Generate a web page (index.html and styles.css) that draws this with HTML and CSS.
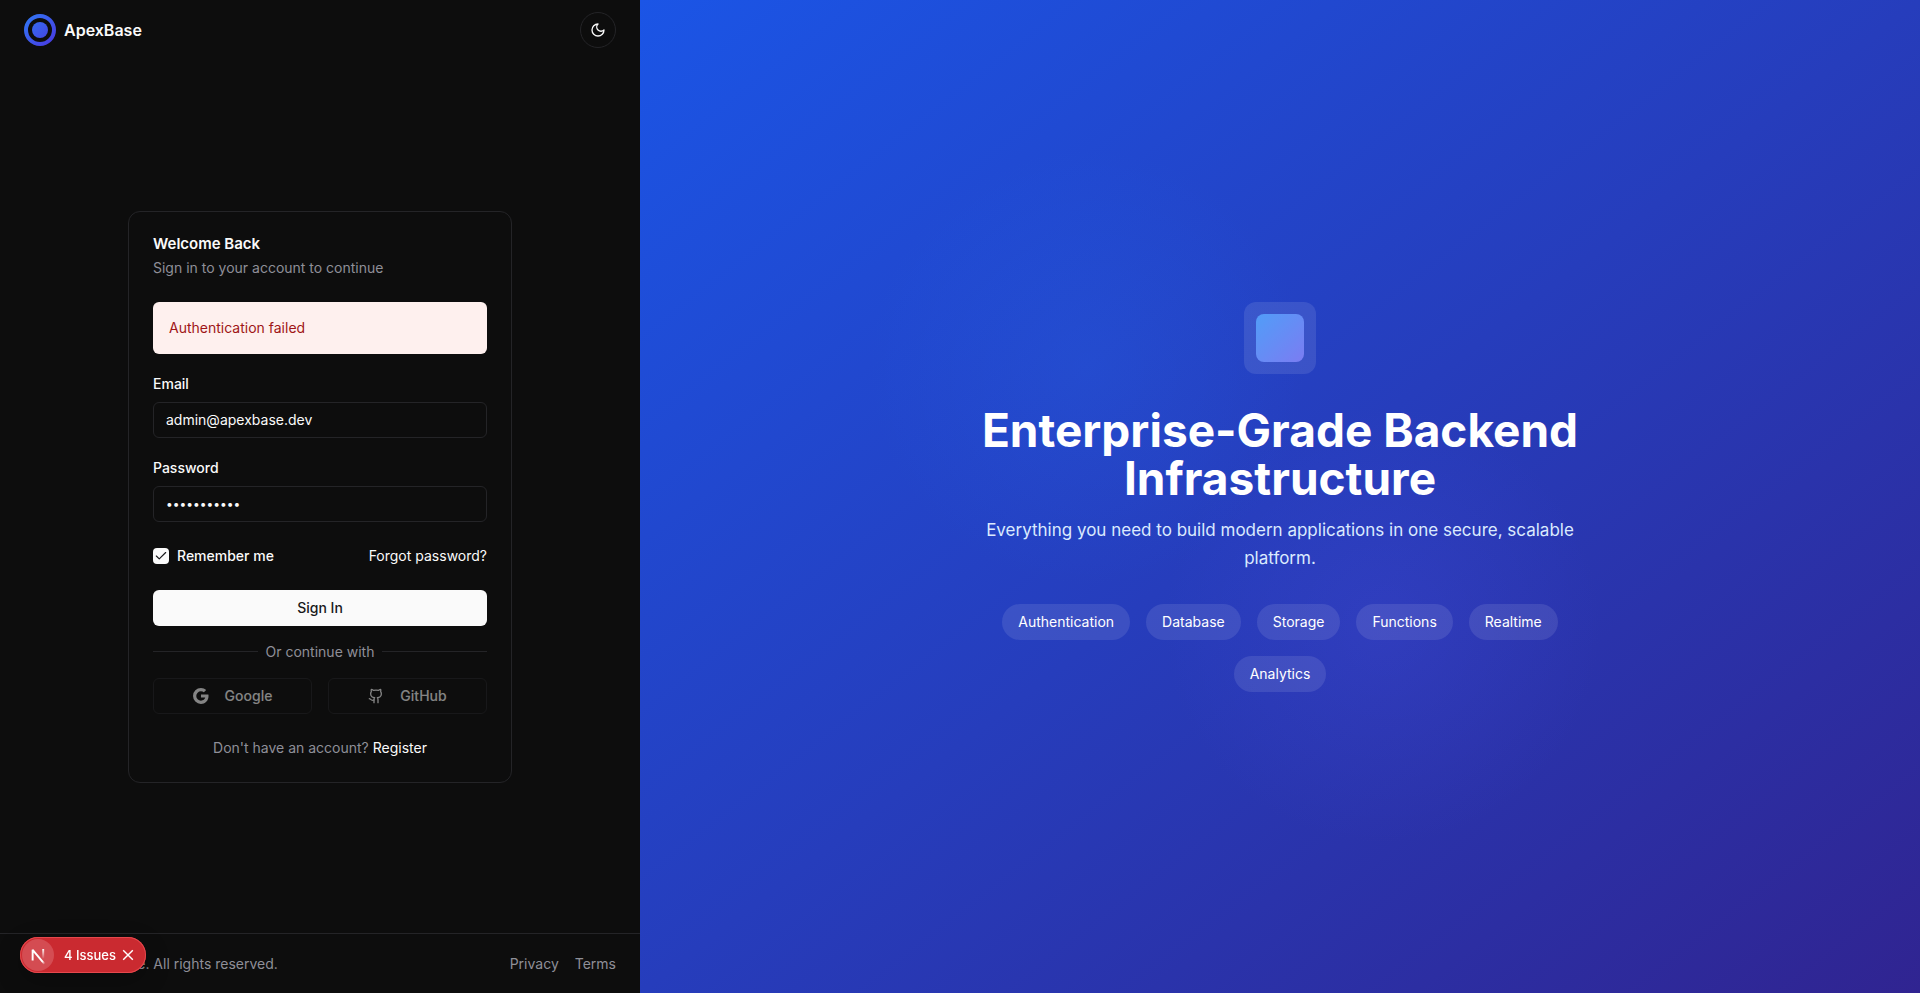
FILE: index.html
```html
<!DOCTYPE html>
<html lang="en">
<head>
<meta charset="utf-8">
<meta name="viewport" content="width=device-width, initial-scale=1">
<title>ApexBase – Sign in</title>
<link rel="stylesheet" href="styles.css">
</head>
<body>
<div class="layout">
  <div class="auth">
    <header class="auth-header">
      <a class="brand" href="#">
        <svg class="brand-mark" viewBox="0 0 32 32" aria-hidden="true">
          <defs><linearGradient id="mark" x1="0" y1="0" x2="32" y2="32" gradientUnits="userSpaceOnUse"><stop offset="0" stop-color="#2f7bf5"/><stop offset="1" stop-color="#4a35e0"/></linearGradient></defs>
          <circle cx="16" cy="16" r="14" fill="none" stroke="url(#mark)" stroke-width="4"/>
          <circle cx="16" cy="16" r="8" fill="url(#mark)"/>
        </svg>
        <span>ApexBase</span>
      </a>
      <button class="theme-toggle" type="button" aria-label="Toggle theme">
        <svg viewBox="0 0 24 24" aria-hidden="true"><path d="M12 3a6 6 0 0 0 9 9 9 9 0 1 1-9-9Z"/></svg>
      </button>
    </header>

    <main class="auth-main">
      <section class="card">
        <div class="card-header">
          <h1 class="card-title">Welcome Back</h1>
          <p class="card-description">Sign in to your account to continue</p>
        </div>
        <form class="form">
          <div class="fields">
            <div class="alert" role="alert">Authentication failed</div>
            <div class="field">
              <label for="email">Email</label>
              <input class="input" id="email" type="email" value="admin@apexbase.dev">
            </div>
            <div class="field">
              <label for="password">Password</label>
              <input class="input password" id="password" type="password" value="password123">
            </div>
          </div>
          <div class="options">
            <label class="remember" for="remember">
              <input class="checkbox" id="remember" type="checkbox" checked>
              <span>Remember me</span>
            </label>
            <a href="#">Forgot password?</a>
          </div>
          <button class="button primary" type="submit">Sign In</button>
        </form>
        <div class="divider"><span>Or continue with</span></div>
        <div class="providers">
          <button class="button outline" type="button" disabled>
            <svg class="google" viewBox="3 3 18 18" aria-hidden="true"><path d="M20.283 10.356h-8.327v3.451h4.792c-.446 2.193-2.313 3.453-4.792 3.453a5.27 5.27 0 0 1-5.279-5.28 5.27 5.27 0 0 1 5.279-5.279c1.259 0 2.397.447 3.29 1.178l2.600-2.599c-1.584-1.381-3.615-2.233-5.890-2.233a8.908 8.908 0 0 0-8.934 8.934 8.907 8.907 0 0 0 8.934 8.934c4.467 0 8.529-3.249 8.529-8.934 0-.528-.081-1.097-.202-1.625z"/></svg>
            Google
          </button>
          <button class="button outline" type="button" disabled>
            <svg class="github" viewBox="0 0 24 24" aria-hidden="true"><path d="M15 22v-4a4.8 4.8 0 0 0-1-3.500c3 0 6-2 6-5.500.08-1.250-.27-2.480-1-3.500.28-1.150.28-2.350 0-3.500 0 0-1 0-3 1.500-2.640-.5-5.360-.5-8 0C6 2 5 2 5 2c-.3 1.150-.3 2.350 0 3.500A5.403 5.403 0 0 0 4 9c0 3.500 3 5.500 6 5.500-.39.49-.68 1.050-.85 1.650-.17.6-.22 1.230-.15 1.850v4"/><path d="M9 18c-4.510 2-5-2-7-2"/></svg>
            GitHub
          </button>
        </div>
        <p class="register">Don't have an account? <a href="#">Register</a></p>
      </section>
    </main>

    <footer class="auth-footer">
      <p>© 2025 ApexBase. All rights reserved.</p>
      <nav class="footer-links"><a href="#">Privacy</a><a href="#">Terms</a></nav>
    </footer>
  </div>

  <aside class="hero">
    <div class="hero-content">
      <div class="hero-badge"><div class="hero-tile"></div></div>
      <h2 class="hero-title">Enterprise-Grade Backend Infrastructure</h2>
      <p class="hero-text">Everything you need to build modern applications in one secure, scalable platform.</p>
      <ul class="tags">
        <li>Authentication</li><li>Database</li><li>Storage</li><li>Functions</li><li>Realtime</li><li>Analytics</li>
      </ul>
    </div>
  </aside>
</div>

<div class="issues">
  <button class="issues-logo" type="button" aria-label="Open dev tools">
    <svg viewBox="0 0 40 40" fill="none" aria-hidden="true">
      <defs>
        <linearGradient id="diag" x1="22" y1="22" x2="29" y2="31" gradientUnits="userSpaceOnUse"><stop stop-color="#fff"/><stop offset="0.600" stop-color="#fff"/><stop offset="1" stop-color="#fff" stop-opacity="0"/></linearGradient>
        <linearGradient id="stem" x1="26" y1="12" x2="26" y2="25" gradientUnits="userSpaceOnUse"><stop stop-color="#fff"/><stop offset="1" stop-color="#fff" stop-opacity="0"/></linearGradient>
      </defs>
      <path d="M13.300 27V13.500L28 31" stroke="url(#diag)" stroke-width="2.400" stroke-linejoin="bevel"/>
      <path d="M26.500 12.500v12" stroke="url(#stem)" stroke-width="2.400"/>
    </svg>
  </button>
  <button class="issues-label" type="button">4 Issues</button>
  <button class="issues-close" type="button" aria-label="Hide issues">
    <svg viewBox="0 0 10 10" aria-hidden="true"><path d="M1 1l8 8M9 1l-8 8"/></svg>
  </button>
</div>
</body>
</html>
```
FILE: styles.css
```css
* {
  box-sizing: border-box;
  margin: 0;
  padding: 0;
}

body {
  background: #0d0d0d;
  color: #fafafa;
  font-family: Inter, "Liberation Sans", sans-serif;
  font-size: 14px;
  line-height: 20px;
}

button,
input {
  font: inherit;
  color: inherit;
}

a {
  color: inherit;
  text-decoration: none;
}

.layout {
  display: grid;
  grid-template-columns: 1fr 2fr;
  min-height: 100vh;
}

.auth {
  display: flex;
  flex-direction: column;
}

.auth-header {
  display: flex;
  align-items: center;
  justify-content: space-between;
  padding: 12px 24px;
}

.brand {
  display: flex;
  align-items: center;
  gap: 8px;
  font-size: 16px;
  line-height: 24px;
  font-weight: 600;
}

.brand-mark {
  width: 32px;
  height: 32px;
}

.theme-toggle {
  display: grid;
  place-items: center;
  width: 36px;
  height: 36px;
  border: 1px solid #242427;
  border-radius: 50%;
  background: transparent;
}

.theme-toggle svg {
  width: 16px;
  height: 16px;
  fill: none;
  stroke: currentColor;
  stroke-width: 2;
  stroke-linecap: round;
  stroke-linejoin: round;
}

.auth-main {
  flex: 1;
  display: flex;
  align-items: center;
  justify-content: center;
  padding: 24px;
}

.card {
  width: 100%;
  max-width: 384px;
  padding: 24px;
  border: 1px solid #242427;
  border-radius: 12px;
}

.card-header {
  margin-bottom: 24px;
}

.card-title {
  font-size: 15px;
  line-height: 16px;
  font-weight: 600;
  margin-bottom: 6px;
}

.card-description,
.register {
  color: #8f8f98;
}

.form {
  display: grid;
  gap: 24px;
}

.fields {
  display: grid;
  gap: 20px;
}

.alert {
  padding: 16px;
  border-radius: 6px;
  background: #fef0ee;
  color: #9f1517;
}

.field {
  display: grid;
  gap: 8px;
}

.field label,
.remember {
  font-weight: 500;
}

.input {
  width: 100%;
  height: 36px;
  padding: 4px 12px;
  border: 1px solid #242427;
  border-radius: 6px;
  background: transparent;
}

.password {
  font-size: 12px;
}

.options {
  display: flex;
  align-items: center;
  justify-content: space-between;
}

.remember {
  display: flex;
  align-items: center;
  gap: 8px;
}

.checkbox {
  appearance: none;
  width: 16px;
  height: 16px;
  border-radius: 4px;
  background: #fafafa url("data:image/svg+xml,%3Csvg xmlns='http://www.w3.org/2000/svg' viewBox='0 0 24 24' fill='none' stroke='%2318181b' stroke-width='2' stroke-linecap='round' stroke-linejoin='round'%3E%3Cpath d='M20 6 9 17l-5-5'/%3E%3C/svg%3E") center / 14px no-repeat;
}

.button {
  display: flex;
  align-items: center;
  justify-content: center;
  height: 36px;
  border: 1px solid transparent;
  border-radius: 6px;
  font-weight: 500;
}

.primary {
  background: #fafafa;
  color: #18181b;
}

.outline {
  gap: 16px;
  border-color: #242427;
  background: transparent;
  opacity: 0.5;
}

.outline svg {
  width: 16px;
  height: 16px;
}

.google {
  fill: currentColor;
}

.github {
  fill: none;
  stroke: currentColor;
  stroke-width: 2;
  stroke-linecap: round;
  stroke-linejoin: round;
}

.divider {
  display: flex;
  align-items: center;
  gap: 8px;
  margin: 16px 0;
  color: #8f8f98;
}

.divider::before,
.divider::after {
  content: "";
  flex: 1;
  height: 1px;
  background: #242427;
}

.providers {
  display: grid;
  grid-template-columns: 1fr 1fr;
  gap: 16px;
}

.register {
  margin-top: 24px;
  text-align: center;
}

.register a {
  color: #fafafa;
}

.auth-footer {
  display: flex;
  align-items: center;
  justify-content: space-between;
  height: 60px;
  padding: 0 24px;
  border-top: 1px solid #242427;
  color: #8f8f98;
}

.footer-links {
  display: flex;
  gap: 16px;
}

.hero {
  display: flex;
  align-items: center;
  justify-content: center;
  padding: 48px;
  background:
    radial-gradient(circle at 35% 37%, rgb(43 127 255 / 13%), transparent 220px),
    radial-gradient(circle at 58% 63%, rgb(97 95 255 / 14%), transparent 220px),
    linear-gradient(to bottom right, #1b55e6, #263dbc 50%, #302491);
}

.hero-content {
  display: flex;
  flex-direction: column;
  align-items: center;
  max-width: 608px;
  text-align: center;
}

.hero-badge {
  padding: 12px;
  margin-bottom: 32px;
  border-radius: 12px;
  background: rgb(255 255 255 / 10%);
}

.hero-tile {
  width: 48px;
  height: 48px;
  border-radius: 8px;
  background: linear-gradient(to bottom right, #519df8, #7b7cf2);
}

.hero-title {
  margin-bottom: 14px;
  color: #fff;
  font-size: 46px;
  line-height: 48px;
  font-weight: 700;
}

.hero-text {
  margin-bottom: 32px;
  color: #dbeafe;
  font-size: 17px;
  line-height: 28px;
}

.tags {
  display: flex;
  flex-wrap: wrap;
  justify-content: center;
  gap: 16px;
  list-style: none;
  color: #fff;
}

.tags li {
  padding: 8px 16px;
  border-radius: 18px;
  background: rgb(255 255 255 / 10%);
}

.issues {
  position: fixed;
  left: 20px;
  bottom: 20px;
  display: flex;
  align-items: center;
  height: 36px;
  padding: 0 12px 0 2px;
  border-radius: 18px;
  background: #ca2a30;
  box-shadow: inset 0 0 0 1px #e5484d, 0 8px 24px rgb(0 0 0 / 25%);
  color: #fff;
  font-size: 13px;
  font-weight: 500;
}

.issues button {
  border: 0;
  background: transparent;
}

.issues .issues-logo {
  width: 32px;
  height: 32px;
  border-radius: 50%;
  background: #d44c52;
}

.issues-logo svg {
  display: block;
  width: 32px;
  height: 32px;
}

.issues-label {
  margin: 0 6px 0 10px;
}

.issues-close svg {
  display: block;
  width: 12px;
  height: 12px;
  fill: none;
  stroke: currentColor;
  stroke-width: 1.2;
}
```
